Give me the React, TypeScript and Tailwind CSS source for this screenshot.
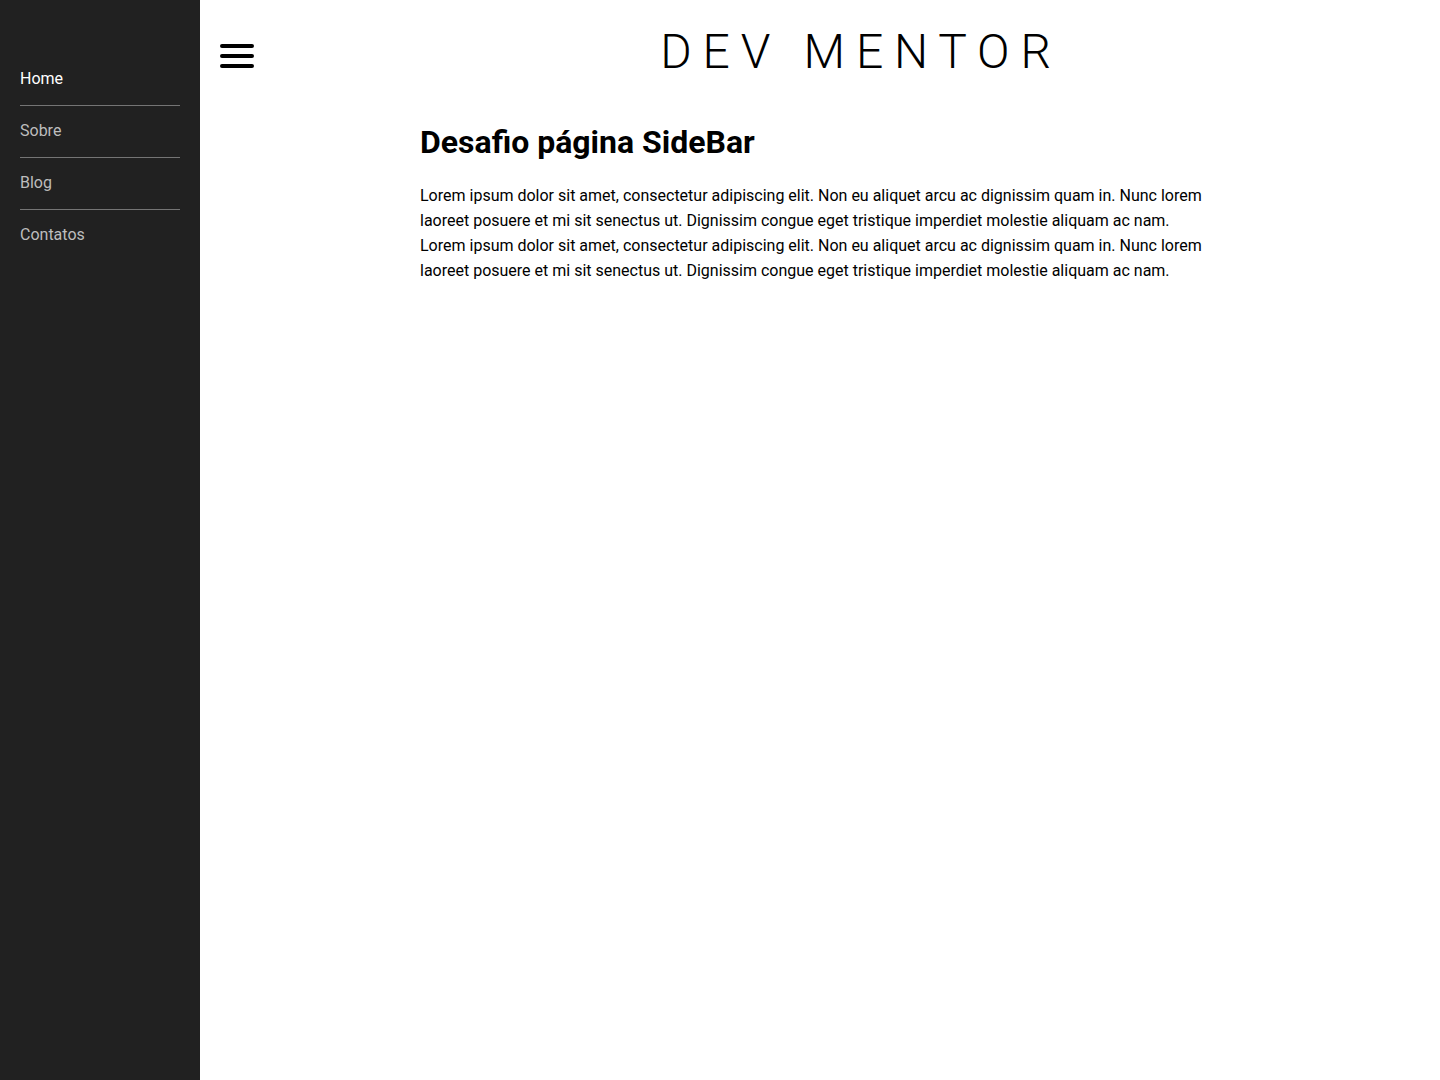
import React from "react";

const links = ["Home", "Sobre", "Blog", "Contatos"];

const lorem =
  "Lorem ipsum dolor sit amet, consectetur adipiscing elit. Non eu aliquet arcu ac dignissim quam in. Nunc lorem laoreet posuere et mi sit senectus ut. Dignissim congue eget tristique imperdiet molestie aliquam ac nam.";

function MenuIcon() {
  return (
    <svg width="34" height="28" viewBox="0 0 34 28" fill="none">
      <path d="M2 4h30M2 14h30M2 24h30" stroke="black" strokeWidth="4" strokeLinecap="round" />
    </svg>
  );
}

export default function App() {
  return (
    <div className="flex min-h-[1080px] bg-white font-['Roboto',sans-serif]">
      <aside className="w-[200px] shrink-0 bg-[#212121] px-5 pt-[54px]">
        <nav className="flex flex-col">
          {links.map((label, i) => (
            <a
              key={label}
              href="#"
              className={`block pt-[13px] pb-[14px] text-base leading-6 ${
                i < links.length - 1 ? "border-b border-[#757575]" : ""
              } ${i === 0 ? "text-white" : "text-[#bdbdbd]"}`}
            >
              {label}
            </a>
          ))}
        </nav>
      </aside>

      <main className="flex-1">
        <header className="flex items-center px-5 pt-[28px]">
          <button className="mt-[7px] shrink-0">
            <MenuIcon />
          </button>
          <h1 className="ml-[48px] flex-1 text-center text-[48px] font-light leading-none tracking-[0.225em] text-black">
            DEV MENTOR
          </h1>
        </header>

        <section className="mx-auto mt-[46px] w-[800px]">
          <h2 className="text-[32px] font-bold leading-tight text-black">Desafio página SideBar</h2>
          <div className="mt-[21px] text-base leading-[25px] text-black">
            <p>{lorem}</p>
            <p>{lorem}</p>
          </div>
        </section>
      </main>
    </div>
  );
}
